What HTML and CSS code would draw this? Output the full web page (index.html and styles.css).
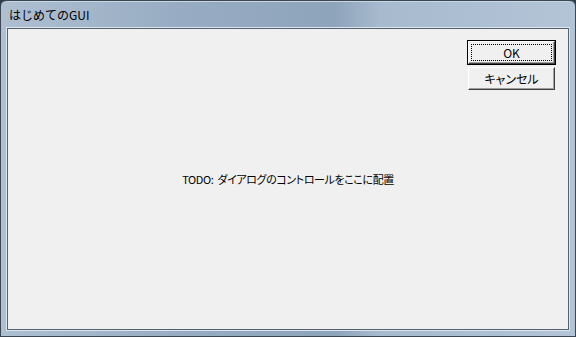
FILE: index.html
```html
<!DOCTYPE html>
<html lang="ja">
<head>
    <meta charset="utf-8" />
    <title>はじめてのGUI</title>
    <link rel="stylesheet" href="styles.css">
</head>
<body>
    <div class="ventana">
        <div class="barraTitulo">はじめてのGUI</div>
        <div class="cliente">
            <div class="botones">
                <button class="boton botonDefecto"><span class="foco">OK</span></button>
                <button class="boton">キャンセル</button>
            </div>
            <p class="mensaje">TODO: ダイアログのコントロールをここに配置</p>
        </div>
    </div>
</body>
</html>
```

FILE: styles.css
```css
*{
    padding:0px;
    margin:0px;
    box-sizing:border-box;
}
body{
    width:576px;
    height:337px;
    overflow:hidden;
    background:#2e3b48;
    font-family:"Noto Sans CJK JP", "Liberation Sans", sans-serif;
    font-size:12px;
}
.ventana{
    width:576px;
    height:337px;
    border:1px solid #3a4652;
    border-radius:6px 6px 0 0;
    background: linear-gradient(to right, #aebfd1 0%, #98adc3 30%, #8ea4bb 58%, #a7bace 66%, #b3c4d7 100%);
    display:flex;
    flex-direction:column;
    padding:0 6px 6px;
}
.barraTitulo{
    height:27px;
    line-height:26px;
    padding-left:2px;
    color:#000;
    font-size:12px;
    border-top:1px solid #c9d6e3;
}
.cliente{
    flex:1;
    background:#f0f0f0;
    border:1px solid #55616e;
    box-shadow:0 0 0 1px #dce6f0;
    display:grid;
}
.botones{
    grid-area:1 / 1;
    justify-self:end;
    align-self:start;
    display:flex;
    flex-direction:column;
    gap:3px;
    margin:12px 13px 0 0;
}
.boton{
    width:87px;
    height:23px;
    font-family:"Noto Sans CJK JP", "Liberation Sans", sans-serif;
    font-size:12px;
    font-feature-settings:"palt";
    color:#000;
    background:#f0f0f0;
    border:1px solid;
    border-color:#fff #404040 #404040 #fff;
    box-shadow:inset -1px -1px #a0a0a0;
    line-height:19px;
}
.botonDefecto{
    outline:1px solid #000;
    outline-offset:0;
    padding:2px;
}
.foco{
    display:block;
    height:100%;
    border:1px dotted #000;
    line-height:15px;
}
.mensaje{
    grid-area:1 / 1;
    place-self:center;
    font-size:11px;
    font-feature-settings:"palt";
    letter-spacing:-0.4px;
    word-spacing:2px;
    color:#000;
}
```
